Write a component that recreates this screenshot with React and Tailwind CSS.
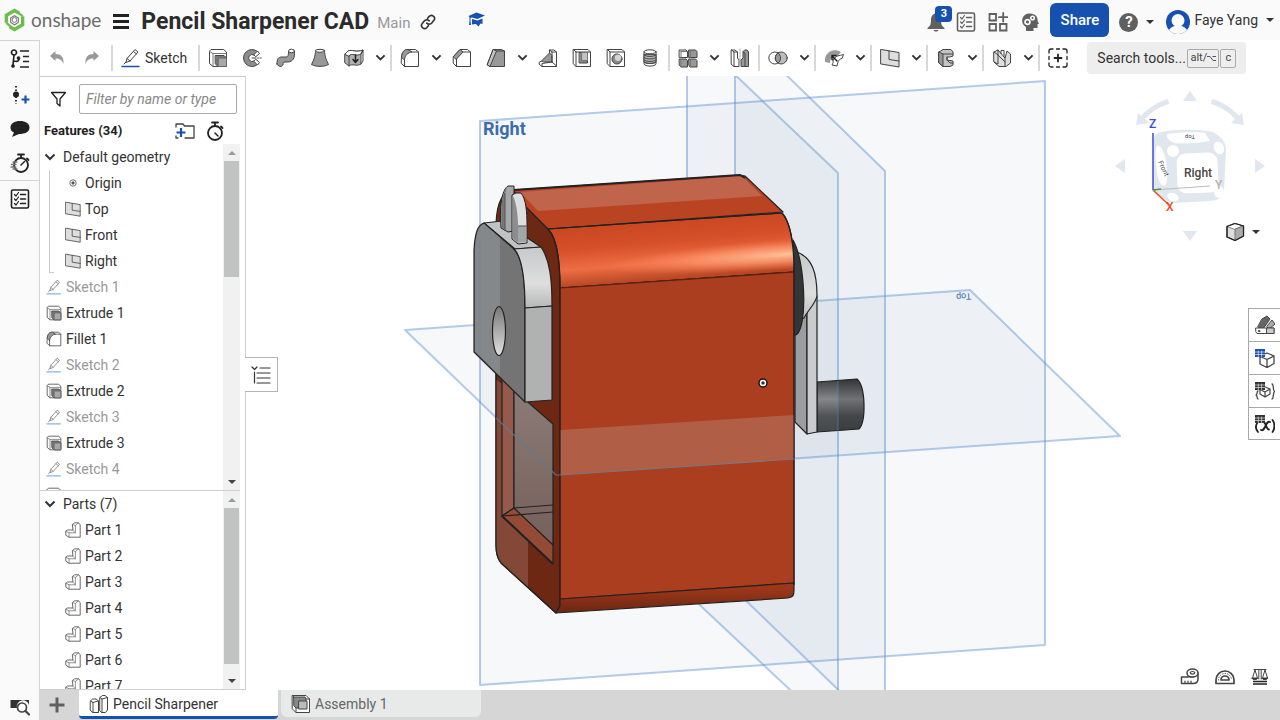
import React from "react";

const INK = "#444";

function Icon({ size = "size-5", children, label }) {
  return (
    <svg
      viewBox="0 0 20 20"
      className={`${size} shrink-0`}
      fill="none"
      stroke={INK}
      strokeWidth="1"
      strokeLinejoin="round"
      strokeLinecap="round"
      role={label ? "img" : undefined}
      aria-label={label}
      aria-hidden={label ? undefined : true}
    >
      {children}
    </svg>
  );
}

const glyphs = {
  extrude: (
    <>
      <path d="M1.500 3.500V15.500L5 18.500H18.500V4L15.500 1.500H3.500Z" fill="#fff" />
      <path d="M1.500 3.500L5 5.500V18.500M5 5.500H18.500" stroke="#777" />
      <path d="M7.500 7.500H16L18.500 10V18.500H10L7.500 16Z" fill="#777" />
      <path d="M10.500 10H18.500V18.500H10.500Z" fill="#a8a8a8" stroke="#666" />
    </>
  ),
  revolve: (
    <>
      <path d="M15.500 3.500A8.500 8.500 0 1 0 15.500 16.500L12 13A3.500 3.500 0 1 1 12 7Z" fill="#8c8c8c" />
      <path d="M12 6.500L15.500 3L17.500 5.500L14 8.500ZM12 13.500L15.500 17L17.500 14.500L14 11.500Z" fill="#fff" />
      <path d="M10 10H19" strokeDasharray="4 1.500 1 1.500" />
    </>
  ),
  sweep: (
    <>
      <path d="M1 16C1 11 2 9 6 9H9C12 9 12.500 8 12.500 3.500H18.500C19 10 17 13.500 12 14H9C7 14 7 15 7 17C6 19 2 19 1 16Z" fill="#999" />
      <ellipse cx="15.500" cy="3" rx="3" ry="1.800" fill="#fff" />
    </>
  ),
  loft: (
    <>
      <path d="M5.500 2.500C5.500 9 3 13 1.500 16.500C6 19 14 19 18.500 16.500C17 13 14.500 9 14.500 2.500Z" fill="#999" />
      <ellipse cx="10" cy="2.800" rx="4.500" ry="1.500" fill="#fff" />
    </>
  ),
  thicken: (
    <>
      <path d="M1 6L4 3C8 1 12 5 19 2L17 6V16C12 19 9 15 5 18L1 15Z" fill="#b0b0b0" />
      <path d="M1 6L4 3C8 1 12 5 19 2L17 6C12 9 8 4 5 8Z" fill="#fff" />
      <path d="M5 8V18M17 6L19 2V13L17 16" />
      <path d="M11.500 7V14M9 11.500L11.500 14.500L14 11.500" stroke="#222" strokeWidth="1.500" />
    </>
  ),
  fillet: (
    <>
      <path d="M1.500 9C2 4 4 1.500 8 1.500H15.500L18.500 4V18.500H4.500L1.500 15.500Z" fill="#fff" />
      <path d="M1.500 9C2 4 4 1.500 8 1.500L12 4C8 4.500 5 7 4.500 11.500Z" fill="#999" />
      <path d="M4.500 11.500V18.500M12 4H18.500" />
    </>
  ),
  chamfer: (
    <>
      <path d="M1.500 8.500L8 1.500H15.500L18.500 4V18.500H4.500L1.500 15.500Z" fill="#fff" />
      <path d="M1.500 8.500L8 1.500L11 4L4.500 11Z" fill="#999" />
      <path d="M4.500 11V18.500M11 4H18.500" />
    </>
  ),
  draft: (
    <>
      <path d="M7.500 1.500H15.500L18.500 3V18.500H4L1.500 17Z" fill="#999" />
      <path d="M7.500 1.500L10.500 3L4 18.500L1.500 17Z" fill="#c4c4c4" />
      <path d="M10.500 3H18.500" />
    </>
  ),
  rib: (
    <>
      <path d="M1.500 14L11.500 9.500V2H16L18.500 4V18.500H4L1.500 16.500Z" fill="#fff" />
      <path d="M4 12.500L11.500 5L14 7.500V14H6Z" fill="#999" />
      <path d="M14 14L18.500 18M11.500 2L14 4V14M14 4H18.500M4 18.500V15.500L14 14" />
    </>
  ),
  shell: (
    <>
      <path d="M1.500 1.500H16L18.500 4V18.500H4L1.500 16Z" fill="#fff" />
      <path d="M4 4H18.500M4 4V18.500M1.500 1.500L4 4" />
      <path d="M7.500 4.500H15.500V15H7.500Z" fill="#888" />
      <path d="M10 4.500H15.500V12.500H10Z" fill="#c4c4c4" stroke="#777" />
    </>
  ),
  hole: (
    <>
      <path d="M1.500 1.500H16L18.500 4V18.500H4L1.500 16Z" fill="#fff" />
      <path d="M4 4H18.500M4 4V18.500M1.500 1.500L4 4" />
      <circle cx="11" cy="11" r="5" fill="#888" />
      <circle cx="12" cy="9.800" r="3.200" fill="#d4d4d4" stroke="none" />
    </>
  ),
  thread: (
    <>
      <path d="M4 4V16C5 18.800 15 18.800 16 16V4Z" fill="#fff" />
      <path d="M4 7V14C6 16 14 16 16 14V7Z" fill="#b5b5b5" />
      <path d="M4 7C6 9 14 9 16 7M4 9.500C6 11.500 14 11.500 16 9.500M4 12C6 14 14 14 16 12M4 14C6 16 14 16 16 14" />
      <ellipse cx="10" cy="3.800" rx="6" ry="2" fill="#fff" />
    </>
  ),
  pattern: (
    <>
      <path d="M1.500 2H8L9.500 3.500V9.500H1.500Z" fill="#fff" />
      <path d="M11 2H17.500L19 3.500V9.500H11ZM1.500 11H8L9.500 12.500V19H3L1.500 17.500ZM11 11H17.500L19 12.500V19H12L11 17.500Z" fill="#999" />
      <path d="M3 3.500H9.500M3 3.500V9.500M12.500 3.500V9.500M3 12.500V19M12.500 12.500V19" stroke="#777" />
    </>
  ),
  mirror: (
    <>
      <path d="M1.500 2H5L7.500 4V10L9 12V18.500H4L1.500 16.500Z" fill="#fff" />
      <path d="M1.500 2L4 4V18.500M4 4H7.500" />
      <path d="M15 2H17L18.500 4V18.500H11V12L13 10V4Z" fill="#999" />
      <path d="M13 4L15 5V18.500" />
      <path d="M10 1V19" stroke="#aaa" strokeDasharray="2 1" />
    </>
  ),
  boolean: (
    <>
      <circle cx="6.800" cy="10" r="6" fill="#fff" />
      <circle cx="13.200" cy="10" r="6" fill="#bbb" />
      <path d="M10 5A6 6 0 0 1 10 15A6 6 0 0 1 10 5Z" fill="#999" />
    </>
  ),
  wrap: (
    <>
      <path d="M1 14C0 6 8 -1 17 4L13 9C9 8 6 10 6 15Z" fill="#999" stroke="none" />
      <path d="M9 12C12 7 15 8 19.500 6.500L18 10.500C15 11 14 13 13 18L8 17C9 15 9.500 14 9 12Z" fill="#fff" />
      <path d="M13 13L8 8M8 11.500V7.500H12" stroke="#222" strokeWidth="1.500" />
    </>
  ),
  plane: (
    <>
      <path d="M1 1.500L19 4.500V19L1 16Z" fill="#dedede" />
      <path d="M9 3V11.500L19 13" />
    </>
  ),
  frame: (
    <>
      <path d="M3 4L7 1.500H15L17 4V8L14 9H11V12L17 13V17L14 18.500H7L3 15Z" fill="#c4c4c4" />
      <path d="M3 4L7 6V18.500L3 15Z" fill="#999" />
      <path d="M7 6H17M11 9V12M11 12L14 15H17" />
    </>
  ),
  sheet: (
    <>
      <path d="M2 4L6 2L13 10L15 3L18.500 6V15L14 18.500H7L2 14Z" fill="#dedede" />
      <path d="M2 4L6 7V16L2 14M13 10V18M6 2V7L13 14" />
      <path d="M9 5.500V2.500H12V8.500" />
    </>
  ),
  pencil: (
    <>
      <path d="M5 14L6 10.500L14 1.500L17 4L9 13Z" fill="#fff" />
      <path d="M12.500 3.500L15.500 6M6 10.500L9 13M5 14L3 16" />
    </>
  ),
  part: (
    <>
      <path d="M9.500 3L12 1H17L19 3.500V19H5L1 16.500V11.500L3 10H9.500Z" fill="#fff" />
      <path d="M1 11.500L5 13.500H13V4.500L9.500 3M13 4.500L17 1M13 13.500L9.500 10M5 13.500V19" stroke="#777" />
    </>
  ),
  partStudio: (
    <>
      <path d="M1.500 7L3.500 5H7L9.500 7V18.500H4L1.500 16.500Z" fill="#fff" />
      <path d="M1.500 7L4 8.500V18.500M4 8.500L9.500 7" />
      <path d="M11 3.500L13.500 1.500H16L18.500 3.500V16L16.500 18.500H12.500L11 17Z" fill="#fff" />
      <path d="M11 3.500L13 5V18.500M13 5L18.500 3.500" />
    </>
  ),
  assembly: (
    <>
      <path d="M1.500 1.500H15L18.500 5V18.500H5L1.500 15Z" fill="#fff" />
      <path d="M5 5H18.500M5 5V18.500M1.500 1.500L5 5" />
      <path d="M3 3H14L15 5V14H5L3 12Z" fill="#888" />
      <path d="M8 7H16V15H8Z" fill="#bbb" />
    </>
  ),
};

function Chevron({ className = "w-3" }) {
  return (
    <svg viewBox="0 0 12 8" className={`${className} shrink-0`} fill="none" stroke="#333" strokeWidth="2" aria-hidden="true">
      <path d="M1.500 1.500L6 6L10.500 1.500" />
    </svg>
  );
}

function Caret({ up = false, color = "#333" }) {
  return (
    <svg viewBox="0 0 8 4" className="w-2 shrink-0" fill={color} aria-hidden="true">
      <path d={up ? "M0 4H8L4 0Z" : "M0 0H8L4 4Z"} />
    </svg>
  );
}

function ToolButton({ name, label }) {
  return (
    <button aria-label={label} className="flex h-8 w-[34px] shrink-0 items-center justify-center">
      <Icon>{glyphs[name]}</Icon>
    </button>
  );
}

function ToolMenu() {
  return (
    <button aria-label="More tools" className="flex h-8 w-[18px] shrink-0 items-center justify-center">
      <Chevron className="w-[11px]" />
    </button>
  );
}

function Divider() {
  return <span className="mx-px h-[26px] w-0.5 shrink-0 bg-[#d8d8d8]" />;
}

function Checklist({ color }) {
  return (
    <Icon>
      <g stroke={color}>
        <rect x="1.500" y="1" width="17" height="18" rx="1.500" strokeWidth="1.600" />
        <path d="M4.500 5.500L6 7L8.500 3.500M4.500 10L6 11.500L8.500 8M4.500 14.500L6 16L8.500 12.500" strokeWidth="1.200" />
        <path d="M10.500 5.500H15.500M10.500 10H15.500M10.500 14.500H15.500" strokeWidth="1.500" />
      </g>
    </Icon>
  );
}

function Stopwatch({ moving }) {
  return (
    <Icon>
      <g transform={moving ? undefined : "translate(-1 0)"}>
        <circle cx="11" cy="12" r="7" strokeWidth="1.800" stroke="#222" fill="#fff" />
        <path d="M11 5V2M8 1.500H14M17 5.500L18.500 7" strokeWidth="1.800" stroke="#222" />
        <path d={moving ? "M11 12L14.500 8.500" : "M11 12L14 15"} strokeWidth="1.500" stroke="#222" />
      </g>
      {moving && <path d="M3 9H7M1.500 11.500H6M1 14H6M3 16H7" stroke="#777" strokeWidth="1.300" />}
    </Icon>
  );
}

function Header() {
  return (
    <header className="flex h-10 shrink-0 items-center bg-[#fafafa] text-[#333]">
      <a href="#home" aria-label="onshape home" className="ml-1 flex items-center gap-1.5">
        <svg viewBox="0 0 22 24" className="h-6 w-[21px]" fill="none" aria-hidden="true">
          <path d="M2.500 15V7L11 2L16 5" stroke="#6abf4b" strokeWidth="3.600" />
          <path d="M19.500 8V17L11 22L6 19" stroke="#6abf4b" strokeWidth="3.600" />
          <path d="M2.500 15L7 19M15 4.500L19.500 8" stroke="#6abf4b" strokeWidth="2.500" />
          <path d="M7 10L11 7.500L15 10V14.500L11 17L7 14.500Z" stroke="#777" strokeWidth="1.200" fill="#fff" />
          <circle cx="11" cy="12" r="2.500" stroke="#777" />
        </svg>
        <span className="font-['Lato',sans-serif] text-[19px] leading-6 text-[#6b6b6b]">onshape</span>
      </a>
      <button aria-label="Main menu" className="ml-3 flex w-4 flex-col gap-[3px] pt-0.5">
        <span className="h-[3px] bg-[#222]" />
        <span className="h-[3px] bg-[#222]" />
        <span className="h-[3px] bg-[#222]" />
      </button>
      <h1 className="mt-1 ml-3 text-[23px] leading-7 font-bold whitespace-nowrap text-[#2b2b2b]">Pencil Sharpener CAD</h1>
      <span className="mt-1.5 ml-2 text-[15px] text-[#999]">Main</span>
      <button aria-label="Copy link" className="mt-1 ml-2.5">
        <svg viewBox="0 0 24 24" className="size-4" fill="none" stroke="#333" strokeWidth="2.400" strokeLinecap="round" aria-hidden="true">
          <g transform="rotate(-6 12 12)">
            <path d="M10 13.500a5 5 0 0 0 7.500.5l3.500-3.500a4.600 4.600 0 0 0-6.500-6.500l-2.500 2.500M14 10.500a5 5 0 0 0-7.500-.5L3 13.500A4.600 4.600 0 0 0 9.500 20l2.500-2.500" />
          </g>
        </svg>
      </button>
      <button aria-label="Learning center" className="ml-8">
        <svg viewBox="0 0 18 16" className="h-4 w-[18px]" fill="#1651b0" aria-hidden="true">
          <path d="M8.500 .5L17 3.500L9.500 7L4 5.500L2.500 6V9L3 13H1L1.500 9V5L.5 4Z" />
          <path d="M4 7L9.500 8.500L14.500 6.500V12L12.500 11.500L10.500 14.500L8 12L4 12.500Z" />
        </svg>
      </button>

      <div className="ml-auto flex items-center">
        <button aria-label="Notifications, 3 new" className="relative mt-1 mr-2.5">
          <svg viewBox="0 0 20 20" className="size-5" fill="#606060" aria-hidden="true">
            <path d="M10 1C13 2 15 4 15 8C15 13 16 14 18.500 16V17H1.500V16C4 14 5 13 5 8C5 4 7 2 10 1ZM7.500 18H12.500C12 20 8 20 7.500 18Z" />
          </svg>
          <span className="absolute -top-1.5 left-[9px] flex h-4 w-[17px] items-center justify-center rounded-sm bg-[#1651b0] text-[11px] font-bold text-white">3</span>
        </button>
        <button aria-label="Release tasks" className="mt-1 mr-3"><Checklist color="#606060" /></button>
        <button aria-label="App store" className="mt-1 mr-3">
          <Icon>
            <g stroke="#606060" strokeWidth="1.800" strokeLinejoin="miter">
              <path d="M1.500 2H8V8.500H1.500ZM1.500 12H8V18.500H1.500ZM12 12H18.500V18.500H12ZM15.200 1V9.500M11 5.200H19.500" />
            </g>
          </Icon>
        </button>
        <button aria-label="Learning tips" className="mt-1 mr-2.5">
          <Icon>
            <path d="M6 19V15C0 12 1 2 9 1.500C15 1 18 5 17.500 8.500L19 12H17.500V16H13.500V19Z" fill="#606060" stroke="none" />
            <circle cx="7.500" cy="10" r="2.400" stroke="#fff" strokeWidth="1.800" strokeDasharray="2 .6" />
            <circle cx="12.500" cy="6" r="1.800" stroke="#fff" strokeWidth="1.600" strokeDasharray="1.600 .5" />
          </Icon>
        </button>
        <button className="h-[34px] w-[59px] rounded-md bg-[#1651b0] text-[15px] font-medium text-white">Share</button>
        <button aria-label="Help" className="mt-1 ml-2.5 flex items-center gap-2">
          <span className="flex size-[19px] items-center justify-center rounded-full bg-[#606060] text-[15px] leading-none font-bold text-white">?</span>
          <Caret />
        </button>
        <button className="mr-1.5 ml-3 flex items-center gap-1 whitespace-nowrap">
          <svg viewBox="0 0 24 24" className="mt-1 size-6" aria-hidden="true">
            <clipPath id="avatar"><circle cx="12" cy="12" r="12" /></clipPath>
            <g clipPath="url(#avatar)">
              <path d="M0 0H24V24H0Z" fill="#1651b0" />
              <circle cx="12" cy="10.500" r="6.500" fill="#fafafa" />
              <ellipse cx="12" cy="23" rx="10" ry="7.500" fill="#fafafa" />
            </g>
          </svg>
          <span className="text-sm">Faye Yang</span>
          <span className="ml-1"><Caret /></span>
        </button>
      </div>
    </header>
  );
}

function Toolbar() {
  return (
    <div role="toolbar" aria-label="Modeling tools" className="flex h-9 shrink-0 items-center bg-white">
      <button aria-label="Undo" className="flex w-[34px] shrink-0 justify-center">
        <svg viewBox="0 0 16 16" className="size-4" fill="#999" aria-hidden="true">
          <path d="M1 6L6.500 1V4C12 4 15 7 14.500 14C13 10 11 8.500 6.500 8.500V11Z" />
        </svg>
      </button>
      <button aria-label="Redo" className="flex w-9 shrink-0 justify-center">
        <svg viewBox="0 0 16 16" className="size-4" fill="#999" aria-hidden="true">
          <path d="M15 6L9.500 1V4C4 4 1 7 1.500 14C3 10 5 8.500 9.500 8.500V11Z" />
        </svg>
      </button>
      <Divider />
      <button className="mr-2.5 ml-[7px] flex shrink-0 items-center gap-1 text-sm text-[#333]">
        <Icon>
          {glyphs.pencil}
          <path d="M1 18.500H18" stroke="#1651b0" strokeWidth="1.500" />
        </Icon>
        Sketch
      </button>
      <Divider />
      <ToolButton name="extrude" label="Extrude" />
      <ToolButton name="revolve" label="Revolve" />
      <ToolButton name="sweep" label="Sweep" />
      <ToolButton name="loft" label="Loft" />
      <ToolButton name="thicken" label="Thicken" />
      <ToolMenu />
      <Divider />
      <ToolButton name="fillet" label="Fillet" />
      <ToolMenu />
      <ToolButton name="chamfer" label="Chamfer" />
      <ToolButton name="draft" label="Draft" />
      <ToolMenu />
      <ToolButton name="rib" label="Rib" />
      <ToolButton name="shell" label="Shell" />
      <ToolButton name="hole" label="Hole" />
      <ToolButton name="thread" label="Thread" />
      <Divider />
      <ToolButton name="pattern" label="Linear pattern" />
      <ToolMenu />
      <ToolButton name="mirror" label="Mirror" />
      <Divider />
      <ToolButton name="boolean" label="Boolean" />
      <ToolMenu />
      <Divider />
      <ToolButton name="wrap" label="Move face" />
      <ToolMenu />
      <Divider />
      <ToolButton name="plane" label="Plane" />
      <ToolMenu />
      <Divider />
      <ToolButton name="frame" label="Frame" />
      <ToolMenu />
      <Divider />
      <ToolButton name="sheet" label="Sheet metal" />
      <ToolMenu />
      <Divider />
      <button aria-label="Add custom features" className="flex w-[34px] shrink-0 justify-center">
        <Icon>
          <path d="M1 5V3A2 2 0 0 1 3 1H5M15 1H17A2 2 0 0 1 19 3V5M19 15V17A2 2 0 0 1 17 19H15M5 19H3A2 2 0 0 1 1 17V15M8.500 1H11.500M8.500 19H11.500M1 8.500V11.500M19 8.500V11.500" stroke="#222" strokeWidth="1.300" />
          <path d="M6.500 10H13.500M10 6.500V13.500" stroke="#222" strokeWidth="1.800" />
        </Icon>
      </button>
      <label className="ml-3 flex h-8 w-[159px] shrink-0 items-center rounded-sm bg-[#eee] pr-2.5 pl-2.5">
        <input aria-label="Search tools" placeholder="Search tools..." className="w-[90px] min-w-0 bg-transparent text-sm outline-none placeholder:text-[#333]" />
        <kbd className="flex h-[19px] w-8 shrink-0 items-center justify-center rounded-xs border border-[#aaa] font-['Roboto',sans-serif] text-[11px] text-[#444]">
          alt/
          <svg viewBox="0 0 9 7" className="h-[7px] w-[9px]" fill="none" stroke="#555" aria-hidden="true"><path d="M0 1.500H3L6 5.500H9M5.500 1.500H9" /></svg>
        </kbd>
        <kbd className="ml-px flex h-[19px] w-4 shrink-0 items-center justify-center rounded-xs border border-[#aaa] font-['Roboto',sans-serif] text-[11px] text-[#444]">c</kbd>
      </label>
    </div>
  );
}

function Rail() {
  return (
    <nav aria-label="Document panels" className="flex w-10 shrink-0 flex-col items-center border-t border-r border-[#d4d4d4] bg-[#fafafa]">
      <button aria-label="Feature list" className="flex h-9 items-center">
        <Icon>
          <g stroke="#222" strokeWidth="1.700">
            <circle cx="4" cy="3.500" r="2.500" />
            <circle cx="3" cy="17" r="1" fill="#222" />
            <path d="M4 6L3 16M4 12C8 13 9 12 9 9" />
            <path d="M10 2H19M13 7.500H19M13 12.500H19M10 18H19" strokeLinecap="butt" />
            <circle cx="8.500" cy="9" r="1" fill="#222" />
          </g>
        </Icon>
      </button>
      <button aria-label="Versions and history" className="flex h-9 items-center">
        <Icon>
          <path d="M6 1V19" stroke="#222" strokeWidth="1.800" strokeDasharray="1.500 2" strokeLinecap="butt" />
          <circle cx="6" cy="9.500" r="3" fill="#222" stroke="none" />
          <path d="M11.500 14.500H19.500M15.500 10.500V18.500" stroke="#1651b0" strokeWidth="2.200" strokeLinecap="butt" />
        </Icon>
      </button>
      <button aria-label="Comments" className="flex h-8 items-center">
        <Icon>
          <path d="M10 2C15.500 2 19.500 4.500 19.500 8.500C19.500 13 15 15 9 15L2 18L4 13.500C1 12.500 .5 10 .5 8.500C.5 4.500 4.500 2 10 2Z" fill="#222" stroke="none" />
        </Icon>
      </button>
      <button aria-label="Performance" className="flex h-9 w-full items-center justify-center border-b border-[#d4d4d4]">
        <Stopwatch moving />
      </button>
      <button aria-label="Custom tables" className="flex h-9 items-center"><Checklist color="#222" /></button>
      <button aria-label="Tab manager" className="mt-auto mb-1">
        <Icon>
          <path d="M.5 4H19V9A6 6 0 0 0 7 12H.5Z" fill="#333" stroke="none" />
          <circle cx="12" cy="11.500" r="4.500" strokeWidth="1.700" fill="#fff" />
          <path d="M15.500 15L19 18.500" strokeWidth="2.200" />
        </Icon>
      </button>
    </nav>
  );
}

function TreeRow({ icon, muted, nested, children }) {
  return (
    <li className={`flex h-[26px] shrink-0 items-center gap-1 text-sm whitespace-nowrap ${nested ? "pl-[25px]" : "pl-1.5"} ${muted ? "text-[#999]" : "text-[#333]"}`}>
      <span className={`flex w-4 shrink-0 justify-center ${muted ? "opacity-70" : ""}`}>
        {icon === "origin" ? (
          <svg viewBox="0 0 10 10" className="size-2" fill="none" stroke="#555" aria-hidden="true">
            <circle cx="5" cy="5" r="4" /><circle cx="5" cy="5" r="1.500" fill="#555" />
          </svg>
        ) : (
          <Icon size="size-4">
            {glyphs[icon]}
            {icon === "pencil" && <path d="M1 18.500H18" stroke="#5b93d6" strokeWidth="1.500" />}
          </Icon>
        )}
      </span>
      {children}
    </li>
  );
}

function ScrollTrack({ thumb }) {
  return (
    <div className="flex w-[17px] shrink-0 flex-col items-center bg-[#f1f1f1]" aria-hidden="true">
      <span className="flex h-[17px] shrink-0 items-center"><Caret up color="#999" /></span>
      <span className={`w-[15px] bg-[#c1c3c2] ${thumb}`} />
      <span className="mt-auto flex h-[17px] shrink-0 items-center"><Caret color="#444" /></span>
    </div>
  );
}

const features = [
  ["pencil", "Sketch 1"], ["extrude", "Extrude 1"], ["fillet", "Fillet 1"], ["pencil", "Sketch 2"],
  ["extrude", "Extrude 2"], ["pencil", "Sketch 3"], ["extrude", "Extrude 3"], ["pencil", "Sketch 4"], ["extrude", ""],
];
const parts = ["Part 1", "Part 2", "Part 3", "Part 4", "Part 5", "Part 6", "Part 7"];

function FeaturePanel() {
  return (
    <aside aria-label="Features and parts" className="relative flex w-[206px] shrink-0 flex-col border-y border-r border-[#cfcfcf] bg-white">
      <div className="flex h-11 shrink-0 items-center pr-2 pl-2">
        <Icon><path d="M3.500 3.500H17.500L12 10V17L9 14.500V10Z" strokeWidth="1.300" stroke="#222" fill="#fff" /></Icon>
        <input
          aria-label="Filter by name or type"
          placeholder="Filter by name or type"
          className="ml-[11px] h-[30px] w-full min-w-0 rounded-xs border border-[#aaa] px-1.5 text-sm italic outline-none placeholder:text-[#888]"
        />
      </div>
      <div className="mb-1 flex h-[19px] shrink-0 items-center pr-3 pl-1">
        <h2 className="text-[13px] font-bold whitespace-nowrap text-[#222]">Features (34)</h2>
        <button aria-label="Add folder" className="ml-auto">
          <Icon>
            <path d="M1 6V3H8L9.500 5H19V17H10M1 15V17H3" strokeWidth="1.300" stroke="#444" />
            <path d="M1.500 11.500H10.500M6 7V16" stroke="#1651b0" strokeWidth="2.200" strokeLinecap="butt" />
          </Icon>
        </button>
        <button aria-label="Regeneration times" className="mr-2 ml-2.5"><Stopwatch /></button>
      </div>
      <div className="mr-[5px] flex h-[347px] shrink-0 border-b border-[#cfcfcf]">
        <div className="min-w-0 flex-1 overflow-hidden">
          <button className="flex h-[26px] items-center gap-[7px] pl-1 text-sm text-[#333]"><Chevron />Default geometry</button>
          <div className="flex">
            <span className="-mr-[14px] mb-px ml-[9px] w-[5px] border-b border-l border-[#ccc]" />
            <ul className="flex-1">
              <TreeRow icon="origin" nested>Origin</TreeRow>
              <TreeRow icon="plane" nested>Top</TreeRow>
              <TreeRow icon="plane" nested>Front</TreeRow>
              <TreeRow icon="plane" nested>Right</TreeRow>
            </ul>
          </div>
          <ul>
            {features.map(([icon, name], index) => (
              <TreeRow key={index} icon={icon} muted={icon === "pencil"}>{name}</TreeRow>
            ))}
          </ul>
        </div>
        <ScrollTrack thumb="h-[116px]" />
      </div>
      <div className="mr-[5px] flex min-h-0 flex-1">
        <div className="min-w-0 flex-1 overflow-hidden">
          <button className="flex h-[26px] items-center gap-[7px] pl-1 text-sm text-[#333]"><Chevron />Parts (7)</button>
          <ul>
            {parts.map((name) => <TreeRow key={name} icon="part" nested>{name}</TreeRow>)}
          </ul>
        </div>
        <ScrollTrack thumb="h-[156px]" />
      </div>
      <button aria-label="Collapse list" className="absolute top-[280px] left-full z-10 flex h-[35px] w-[33px] items-center justify-center border border-l-0 border-[#b5b5b5] bg-white">
        <Icon>
          <path d="M1 2L3.500 4.500L6 2M3.500 7V18M9 3H19M6 8H19M6 13H19M6 18H19" stroke="#333" strokeWidth="1.200" />
        </Icon>
      </button>
    </aside>
  );
}

function Model() {
  return (
    <svg
      viewBox="246 76 1034 614"
      preserveAspectRatio="xMidYMid slice"
      className="absolute inset-0 size-full"
      role="img"
      aria-label="Pencil sharpener model with reference planes"
      strokeLinejoin="round"
    >
      <defs>
        <linearGradient id="round" gradientUnits="userSpaceOnUse" x1="665" y1="220" x2="670" y2="282">
          <stop offset="0" stopColor="#c94721" /><stop offset=".35" stopColor="#d65029" />
          <stop offset=".68" stopColor="#ee6d44" /><stop offset="1" stopColor="#ae401f" />
        </linearGradient>
        <radialGradient id="shine" gradientUnits="userSpaceOnUse" cx="0" cy="0" r="1" gradientTransform="translate(790 254) rotate(-4) scale(190 15)">
          <stop offset="0" stopColor="#fcc79a" stopOpacity=".95" /><stop offset=".5" stopColor="#ff9a70" stopOpacity=".7" /><stop offset="1" stopColor="#ff8055" stopOpacity="0" />
        </radialGradient>
        <linearGradient id="bottom" x1="0" y1="0" x2="0" y2="1">
          <stop offset=".2" stopColor="#9c371a" /><stop offset="1" stopColor="#6b2612" />
        </linearGradient>
        <linearGradient id="metal" x1="0" y1="0" x2="0" y2="1">
          <stop offset="0" stopColor="#c6cacb" /><stop offset=".6" stopColor="#dedede" /><stop offset="1" stopColor="#b5b7b7" />
        </linearGradient>
        <linearGradient id="bore" x1="0" y1="0" x2="0" y2="1">
          <stop offset="0" stopColor="#777" /><stop offset="1" stopColor="#e0e0e0" />
        </linearGradient>
        <linearGradient id="knob" x1="0" y1="0" x2="0" y2="1">
          <stop offset="0" stopColor="#3c3e40" /><stop offset=".38" stopColor="#85878a" /><stop offset=".7" stopColor="#505356" /><stop offset="1" stopColor="#45484a" />
        </linearGradient>
        <linearGradient id="inside" x1="0" y1="0" x2="0" y2="1">
          <stop offset="0" stopColor="#8b7b76" /><stop offset="1" stopColor="#75605b" />
        </linearGradient>
      </defs>

      <g stroke="#5b8fd0" strokeOpacity=".45" strokeWidth="2" fill="#5b84a8" fillOpacity=".055">
        <path d="M480 121L1045 81V645L480 685Z" />
        <path d="M687 29L838 173V735L687 593Z" />
        <path d="M735 25L885 171V735L735 590Z" />
        <path d="M405 330L970 290L1120 436L556 475Z" />
      </g>
      <text x="483" y="135" fill="#3b6cae" fontSize="18" fontWeight="700" fontFamily="Roboto, sans-serif">Right</text>
      <text x="971" y="293" transform="rotate(176 971 293)" fill="#3568ad" fontSize="9" fontFamily="Roboto, sans-serif">Top</text>

      <g stroke="#222" strokeWidth="1.200">
        <path d="M817 382L857 379C866 387 866 422 859 429L817 432Z" fill="url(#knob)" />
        <path d="M838 381L857 379C866 387 866 422 859 429L838 431Z" fill="#000" fillOpacity=".15" stroke="none" />
        <path d="M795 330L807 312V434L795 422Z" fill="#9b9ea0" />
        <path d="M807 312L817 296V432L807 434Z" fill="#c9cccd" />
        <path d="M797 252C812 258 817 272 817 296C816 303 808 310 804 318L797 322Z" fill="url(#metal)" />
        <path d="M793 240C803 258 806 300 802 322C800 332 797 336 794 335Z" fill="#333536" />

        <path d="M496 224C497 200 503 191 515 191L548 224C558 240 560 260 560 288V605L556 613L501 563C497 558 496 552 496 545Z" fill="#6c2812" />
        <path d="M496 380L528 400V588L501 563C497 558 496 552 496 545Z" fill="#844838" stroke="none" />
        <path d="M496 370V545C496 552 497 558 501 563L556 613" fill="none" />
        <path d="M513 190L740 175L745 176L783 212L548 229L525 206Z" fill="#ba4421" />
        <path d="M520 192L742 176L762 196L538 211Z" fill="#c0644b" stroke="none" />
        <path d="M513 190L740 175L745 178" strokeWidth="2" fill="none" />
        <path d="M548 229L782 213C792 224 794 250 794 272L560 288C560 260 557 238 548 229Z" fill="url(#round)" />
        <path d="M548 229L782 213C792 224 794 250 794 272L560 288C560 260 557 238 548 229Z" fill="url(#shine)" />
        <path d="M560 288L794 272V583L560 599Z" fill="#ab3e1e" stroke="#5a2110" />
        <path d="M560 430L794 415V459L560 475Z" fill="#b15e46" stroke="none" />
        <path d="M560 599L794 583V590C794 596 793 597 788 598L556 613L560 606Z" fill="url(#bottom)" />
        <path d="M794 270V585M560 288V600" fill="none" />

        <path d="M502 378L514 390V508L502 516Z" fill="#965a4c" />
        <path d="M502 516L514 508L553 543V564Z" fill="#954a36" />
        <path d="M514 390L553 424V545L514 508Z" fill="url(#inside)" />
        <path d="M514 508L553 505M502 516L553 512" />
        <path d="M502 516L553 564" strokeWidth="2" />
        <path d="M496 418L556 475L560 475" stroke="#637b91" strokeOpacity=".8" fill="none" />
        <path d="M560 475L795 459" stroke="#7a7780" />

        <path d="M484 223L502 221L541 247L515 249Z" fill="#bfc3c4" />
        <path d="M501 228C499 202 503 189 508 186H514V231L508 232Z" fill="#a5a8a9" strokeWidth="1" />
        <path d="M502 228C500 204 503 191 507 188L505 193V230Z" fill="#747677" stroke="none" />
        <path d="M505 193V231" stroke="#555" strokeWidth="1" />
        <path d="M512 195L516 193H521C526 199 527 212 527 225V243L518 244L512 239Z" fill="#dcdedf" strokeWidth="1" />
        <path d="M513 196C516 202 518 214 518 226V243L513 239Z" fill="#8b8d8e" stroke="none" />
        <path d="M518 226H526V242L518 243Z" fill="#a3a6a7" stroke="none" />
        <path d="M518 226H527" stroke="#555" strokeWidth="1" />
        <path d="M474 352V250C475 232 478 225 484 223L514 249C522 257 525 280 525 308V402Z" fill="#747474" />
        <path d="M475 351V250C476 232 479 226 484 224L500 238V376Z" fill="#85888a" stroke="none" />
        <path d="M514 249L541 247C550 260 552 280 552 306L525 308C525 280 522 257 514 249Z" fill="url(#metal)" />
        <path d="M525 308L552 306V400L525 402Z" fill="#b0b2b2" />
        <ellipse cx="499" cy="331" rx="6.500" ry="24.500" fill="url(#bore)" />
      </g>
      <path d="M480 240V357" stroke="#6082a5" strokeOpacity=".5" />
      <path d="M838 381V431" stroke="#5b8fd0" strokeOpacity=".35" strokeWidth="1.500" />
      <circle cx="763" cy="383" r="4" fill="#333" stroke="#111" strokeWidth="1.500" />
      <circle cx="763" cy="383" r="2.500" fill="none" stroke="#fff" strokeWidth="1.500" />
    </svg>
  );
}

function ViewCube() {
  return (
    <svg viewBox="1110 86 160 160" className="absolute top-2.5 right-2.5 size-40" role="img" aria-label="View cube">
      <g fill="#e0e7ee">
        <path d="M1190 91L1197 101H1183ZM1190 241L1197 231H1183ZM1115 166L1125 159V173ZM1265 166L1255 159V173Z" />
        <path d="M1168 99L1169 104C1159 107 1151 112 1145 119L1149 123L1136 125L1138 113L1141 116C1148 108 1157 102 1168 99Z" />
        <path d="M1212 99L1211 104C1221 107 1229 112 1235 119L1231 123L1244 125L1242 113L1239 116C1232 108 1223 102 1212 99Z" />
        <path d="M1161 132C1175 129 1200 129 1213 132C1222 137 1226 143 1226 150L1224 190C1222 199 1218 200 1210 201L1175 203C1163 201 1153 192 1153 186V144C1153 137 1155 134 1161 132Z" />
      </g>
      <g fill="#fff">
        <path d="M1168 134C1178 132 1197 132 1205 133L1210 141C1200 143 1180 144 1174 143C1169 141 1165 136 1168 134Z" />
        <rect x="1177" y="153" width="41" height="40" rx="9" transform="rotate(-2 1197 173)" />
        <path d="M1157 146C1162 143 1167 160 1167 170C1168 182 1166 188 1162 185C1156 180 1154 150 1157 146Z" />
        <circle cx="1173" cy="151" r="6" /><ellipse cx="1219" cy="148" rx="5" ry="6.500" transform="rotate(-25 1219 148)" />
        <ellipse cx="1173" cy="197" rx="6" ry="4" transform="rotate(20 1173 197)" /><ellipse cx="1219" cy="192" rx="5" ry="6" />
      </g>
      <text x="1184" y="177" fill="#444" fontSize="12" fontWeight="500" fontFamily="Roboto, sans-serif">Right</text>
      <text x="1158" y="162" fill="#444" fontSize="7" fontFamily="Roboto, sans-serif" transform="rotate(65 1158 162)">Front</text>
      <text x="1195" y="135" fill="#444" fontSize="6" fontFamily="Roboto, sans-serif" transform="rotate(180 1195 135)">Top</text>
      <path d="M1153 190L1210 186" stroke="#bbb" />
      <path d="M1153 133V190" stroke="#4049dd" strokeWidth="1.500" />
      <path d="M1153 190L1169 205" stroke="#f04a1b" strokeWidth="1.500" />
      <path d="M1153 190L1161 189" stroke="#4a9a3a" strokeWidth="1.500" />
      <g fontSize="12" fontWeight="500" fontFamily="Roboto, sans-serif">
        <text x="1149" y="128" fill="#4049dd">Z</text>
        <text x="1166" y="211" fill="#f04a1b">X</text>
        <text x="1215" y="189" fill="#b5b5b5">Y</text>
      </g>
    </svg>
  );
}

function TableGrid({ color }) {
  return (
    <>
      <path d="M0 1H10V9H0Z" fill={color} stroke="none" />
      <path d="M0 4H10M0 6.500H10M3.300 3V9M6.600 3V9" stroke="#fff" strokeWidth=".6" />
    </>
  );
}

function SidePanels() {
  const cell = "flex h-[33px] w-8 items-center justify-center border-t border-l border-[#a8a8a8] bg-white last:border-b";
  return (
    <div className="absolute top-[232px] right-0 flex flex-col">
      <button aria-label="Appearances" className={cell}>
        <Icon>
          <path d="M12 11L17 5L20 9L14 14Z" fill="#aaa" />
          <path d="M7 4L12 1L15 4L8 14L3 12Z" fill="#666" />
          <path d="M1 13H19V18.500H2L1 17Z" fill="#fff" /><path d="M12 13H19V18.500H12Z" fill="#ccc" />
          <circle cx="4" cy="16" r=".8" />
        </Icon>
      </button>
      <button aria-label="Configurations" className={cell}>
        <Icon>
          <path d="M12 5L19 8V15.500L12 19.500L5 16V8.500ZM5 8.500L12 11.500L19 8M12 11.500V19.500" strokeWidth="1.300" fill="#fff" />
          <TableGrid color="#1651b0" />
        </Icon>
      </button>
      <button aria-label="Configured properties" className={cell}>
        <Icon>
          <path d="M10 6L15 8V13L10 16L5 13V8.500L10 11L15 8M10 11V16" fill="#fff" strokeWidth="1.200" />
          <path d="M3 10C1.500 10 3 13 1 14C3 15 1.500 18 3 18M17 3C19 3 17.500 9 19.500 10.500C17.500 12 19 18 17 18" strokeWidth="1.300" />
          <TableGrid color="#333" />
        </Icon>
      </button>
      <button aria-label="Variables" className={cell}>
        <Icon>
          <path d="M3 8C.5 11 .5 15 3 18M17.500 6C20 9 20 15 17.500 18" stroke="#222" strokeWidth="1.800" />
          <path d="M6 16C8 17 9 15 10.500 12S13 7 15 8M8 8C11 7 11 16 14 15.500" stroke="#222" strokeWidth="1.900" />
          <TableGrid color="#333" />
        </Icon>
      </button>
    </div>
  );
}

function Viewport() {
  return (
    <main className="relative min-w-0 flex-1 overflow-hidden bg-white">
      <Model />
      <ViewCube />
      <button aria-label="View options" className="absolute top-[146px] right-5 flex items-center gap-[7px]">
        <Icon>
          <path d="M10 1.500L18.500 4V14L10 18.500L2 15V4.500Z" fill="#ddd" strokeWidth="1.200" />
          <path d="M10 1.500L18.500 4L10 7.500L2 4.500Z" fill="#fff" stroke="#888" /><path d="M18.500 4V14L10 18.500V7.500Z" fill="#aaa" stroke="#777" />
          <path d="M10 1.500L18.500 4V14L10 18.500L2 15V4.500Z" strokeWidth="1.200" stroke="#222" />
        </Icon>
        <Caret />
      </button>
      <SidePanels />
      <div className="absolute right-2.5 bottom-1 flex gap-[15px]">
        <button aria-label="Measure">
          <Icon>
            <path d="M8 11H1.500V17.500H13C16.500 17.500 18 15.500 18 13V7" fill="#fff" strokeWidth="1.500" />
            <ellipse cx="12.500" cy="7" rx="5.500" ry="4" fill="#fff" strokeWidth="1.500" />
            <ellipse cx="12.500" cy="6.800" rx="2.200" ry="1.300" strokeWidth="1.200" />
            <path d="M8 11H13M5 17V15M8 17V15M11 17V15" strokeWidth="1.200" />
          </Icon>
        </button>
        <button aria-label="Protractor">
          <Icon>
            <path d="M1 17.500V14A9 9 0 0 1 19 14V17.500Z" strokeWidth="1.700" fill="#fff" />
            <path d="M6 14A4 4 0 0 1 14 14Z" strokeWidth="1.700" /><path d="M3.500 14A6.500 6.500 0 0 1 16.500 14" strokeDasharray=".5 2" />
          </Icon>
        </button>
        <button aria-label="Mass properties">
          <Icon>
            <path d="M4 3.500H16M8.800 3.500V13M11.200 3.500V13M5 4L2.500 12M5 4L7.500 12M15 4L12.500 12M15 4L17.500 12" strokeWidth="1" />
            <path d="M2 12H8L6.500 13.500H3.500ZM12 12H18L16.500 13.500H13.500Z" fill="#333" /><path d="M3 15.500H17M3 18H17" strokeWidth="1.600" strokeLinecap="butt" stroke="#222" />
          </Icon>
        </button>
      </div>
    </main>
  );
}

function TabBar() {
  return (
    <footer className="flex h-[30px] shrink-0 items-start bg-[#d6d6d6] text-sm text-[#333]">
      <button aria-label="Insert new tab" className="flex h-full w-[39px] items-center justify-center pr-1.5">
        <svg viewBox="0 0 16 16" className="size-4" stroke="#606060" strokeWidth="3" aria-hidden="true"><path d="M8 .5V15.500M.5 8H15.500" /></svg>
      </button>
      <button className="flex h-[29px] w-[199px] items-center gap-1 rounded-b-sm border-b-[3px] border-[#1651b0] bg-white pt-0.5 pl-2.5">
        <Icon>{glyphs.partStudio}</Icon>Pencil Sharpener
      </button>
      <button className="ml-[3px] flex h-[27px] w-[200px] items-center gap-1 rounded-b-md bg-[#e8eae9] pl-2.5 text-[#666]">
        <Icon>{glyphs.assembly}</Icon>Assembly 1
      </button>
    </footer>
  );
}

export default function App() {
  return (
    <div className="flex h-screen flex-col overflow-hidden bg-white font-['Roboto','Liberation_Sans',sans-serif] antialiased">
      <Header />
      <div className="flex min-h-0 flex-1">
        <Rail />
        <div className="flex min-w-0 flex-1 flex-col">
          <Toolbar />
          <div className="flex min-h-0 flex-1">
            <FeaturePanel />
            <Viewport />
          </div>
          <TabBar />
        </div>
      </div>
    </div>
  );
}
